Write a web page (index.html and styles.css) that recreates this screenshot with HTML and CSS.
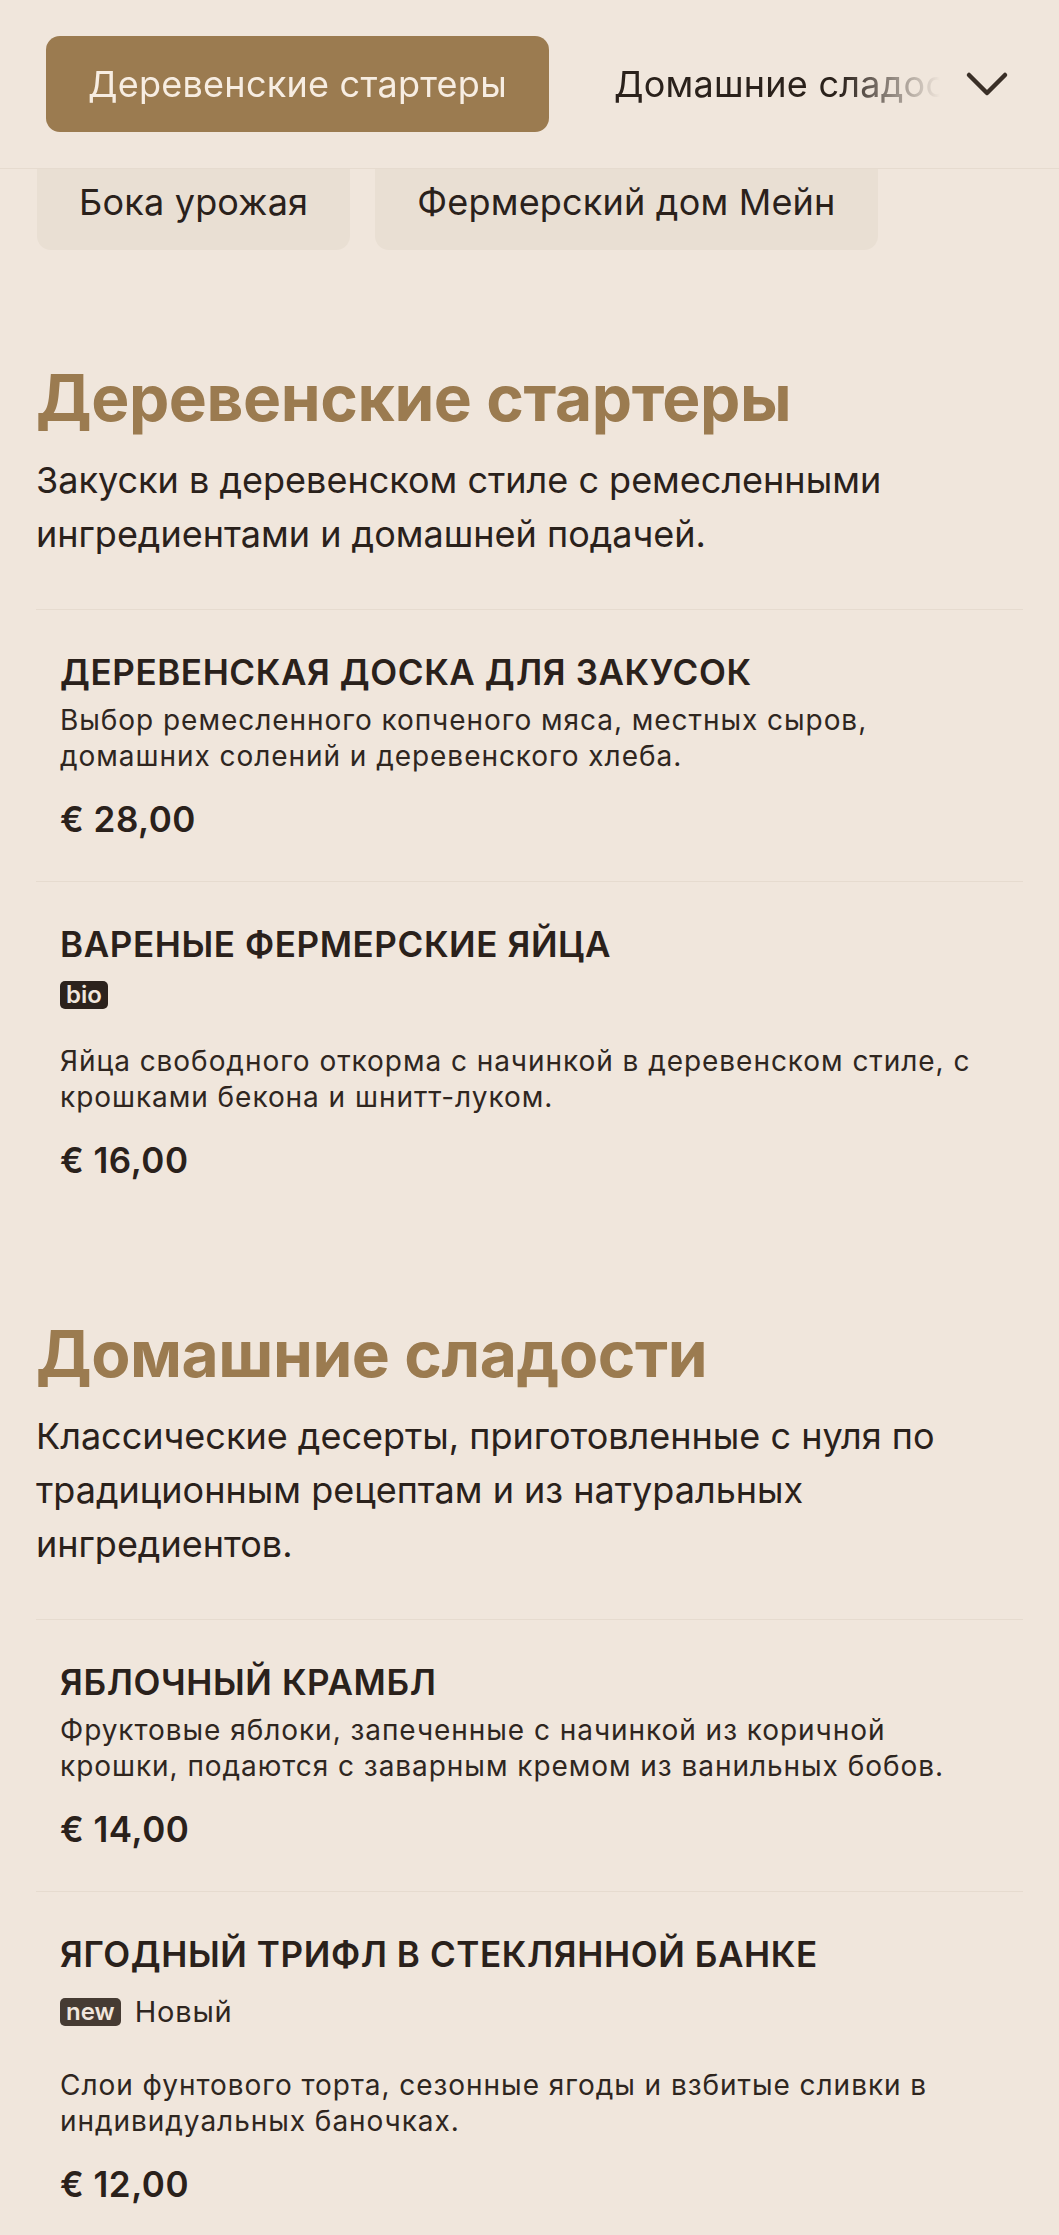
FILE: index.html
```html
<!DOCTYPE html>
<html lang="ru">
<head>
<meta charset="utf-8">
<title>Меню</title>
<link rel="stylesheet" href="styles.css">
</head>
<body>
<header class="topbar">
  <nav class="tabs">
    <a class="tab active" href="#starters">Деревенские стартеры</a>
    <a class="tab" href="#sweets">Домашние сладости</a>
  </nav>
  <button class="more" aria-label="Все категории">
    <svg width="44" height="28" viewBox="0 0 44 28" aria-hidden="true"><polyline points="4,5 22,23 40,5" fill="none" stroke="#3a2f27" stroke-width="4.5" stroke-linecap="round" stroke-linejoin="round"/></svg>
  </button>
</header>

<div class="filters">
  <button class="chip">Бока урожая</button>
  <button class="chip">Фермерский дом Мейн</button>
</div>

<main class="menu">
  <section class="section" id="starters">
    <h2 class="section-title">Деревенские стартеры</h2>
    <p class="section-desc">Закуски в деревенском стиле с ремесленными ингредиентами и домашней подачей.</p>

    <article class="item">
      <h3 class="item-title">ДЕРЕВЕНСКАЯ ДОСКА ДЛЯ ЗАКУСОК</h3>
      <p class="item-desc">Выбор ремесленного копченого мяса, местных сыров, домашних солений и деревенского хлеба.</p>
      <div class="item-price">€ 28,00</div>
    </article>

    <article class="item">
      <h3 class="item-title">ВАРЕНЫЕ ФЕРМЕРСКИЕ ЯЙЦА</h3>
      <div class="tags"><span class="tag">bio</span></div>
      <p class="item-desc">Яйца свободного откорма с начинкой в деревенском стиле, с крошками бекона и шнитт-луком.</p>
      <div class="item-price">€ 16,00</div>
    </article>
  </section>

  <section class="section" id="sweets">
    <h2 class="section-title">Домашние сладости</h2>
    <p class="section-desc">Классические десерты, приготовленные с нуля по традиционным рецептам и из натуральных ингредиентов.</p>

    <article class="item">
      <h3 class="item-title">ЯБЛОЧНЫЙ КРАМБЛ</h3>
      <p class="item-desc">Фруктовые яблоки, запеченные с начинкой из коричной крошки, подаются с заварным кремом из ванильных бобов.</p>
      <div class="item-price">€ 14,00</div>
    </article>

    <article class="item">
      <h3 class="item-title">ЯГОДНЫЙ ТРИФЛ В СТЕКЛЯННОЙ БАНКЕ</h3>
      <div class="tags"><span class="tag tag-new">new</span><span class="tag-label">Новый</span></div>
      <p class="item-desc">Слои фунтового торта, сезонные ягоды и взбитые сливки в индивидуальных баночках.</p>
      <div class="item-price">€ 12,00</div>
    </article>
  </section>
</main>
</body>
</html>
```

FILE: styles.css
```css
* { box-sizing: border-box; }

html, body {
  margin: 0;
  background: #f0e6dc;
  color: #2a211b;
}

body {
  font-family: Inter, "Noto Sans", sans-serif;
}

/* top category bar */
.topbar {
  position: sticky;
  top: 0;
  z-index: 2;
  display: flex;
  align-items: center;
  padding: 36px 0 36px 46px;
  background: #f0e6dc;
  border-bottom: 1px solid #e6dbcf;
}

.tabs {
  flex: 1;
  min-width: 0;
  display: flex;
  gap: 23px;
  overflow: hidden;
  -webkit-mask-image: linear-gradient(to right, #000 calc(100% - 100px), transparent 100%);
  mask-image: linear-gradient(to right, #000 calc(100% - 100px), transparent 100%);
}

.tab {
  flex: none;
  height: 96px;
  padding: 0 42px;
  display: flex;
  align-items: center;
  border-radius: 14px;
  font-size: 36px;
  letter-spacing: 0.25px;
  color: #2a211b;
  text-decoration: none;
  white-space: nowrap;
}

.tab.active {
  background: #9b7b50;
  color: #f7ede2;
}

.more {
  flex: none;
  display: flex;
  align-items: center;
  padding: 0 50px 0 25px;
  background: none;
  border: 0;
}

.more svg { display: block; }

/* filter chips */
.filters {
  display: flex;
  gap: 25px;
  padding: 0 36px 0 37px;
  margin: -15px 0 16px;
}

.chip {
  height: 96px;
  padding: 0 42px;
  border: 0;
  border-radius: 14px;
  background: #e9dfd3;
  font-family: Inter, "Noto Sans", sans-serif;
  font-size: 36px;
  letter-spacing: 0.2px;
  color: #2a211b;
  white-space: nowrap;
}

/* menu */
.menu {
  padding: 0 36px;
}

.section {
  padding-top: 94px;
}

.section-title {
  margin: 0;
  font-weight: 700;
  font-size: 64px;
  line-height: 1.2;
  letter-spacing: -0.4px;
  color: #9b7b50;
}

.section-desc {
  margin: 16px 0 48px;
  font-size: 36px;
  line-height: 54px;
  color: #2a211b;
}

.item {
  border-top: 1px solid #e6dbcf;
  padding: 40px 24px;
}

.item-title {
  margin: 0;
  font-size: 35px;
  line-height: 44px;
  letter-spacing: 0.6px;
  font-weight: 600;
  color: #2a211b;
}

.item-desc {
  margin: 8px 0 0;
  font-size: 28px;
  line-height: 36px;
  letter-spacing: 0.95px;
  color: #2f261f;
}

.tags {
  display: flex;
  align-items: center;
  gap: 14px;
  margin: 15px 0 34px;
}

.tags + .item-desc { margin-top: 0; }

.tag {
  display: inline-block;
  height: 28px;
  padding: 0 6px;
  border-radius: 5px;
  background: #2c221c;
  color: #f0e6dc;
  font-size: 24px;
  line-height: 28px;
  font-weight: 600;
}

.tag-new {
  background: #463b33;
}

.tag-label {
  font-size: 29px;
  line-height: 42px;
  letter-spacing: 0.8px;
  color: #2f261f;
}

.item-price {
  margin-top: 23px;
  font-size: 35px;
  line-height: 44px;
  letter-spacing: 0.5px;
  font-weight: 600;
  color: #2a211b;
}
```
